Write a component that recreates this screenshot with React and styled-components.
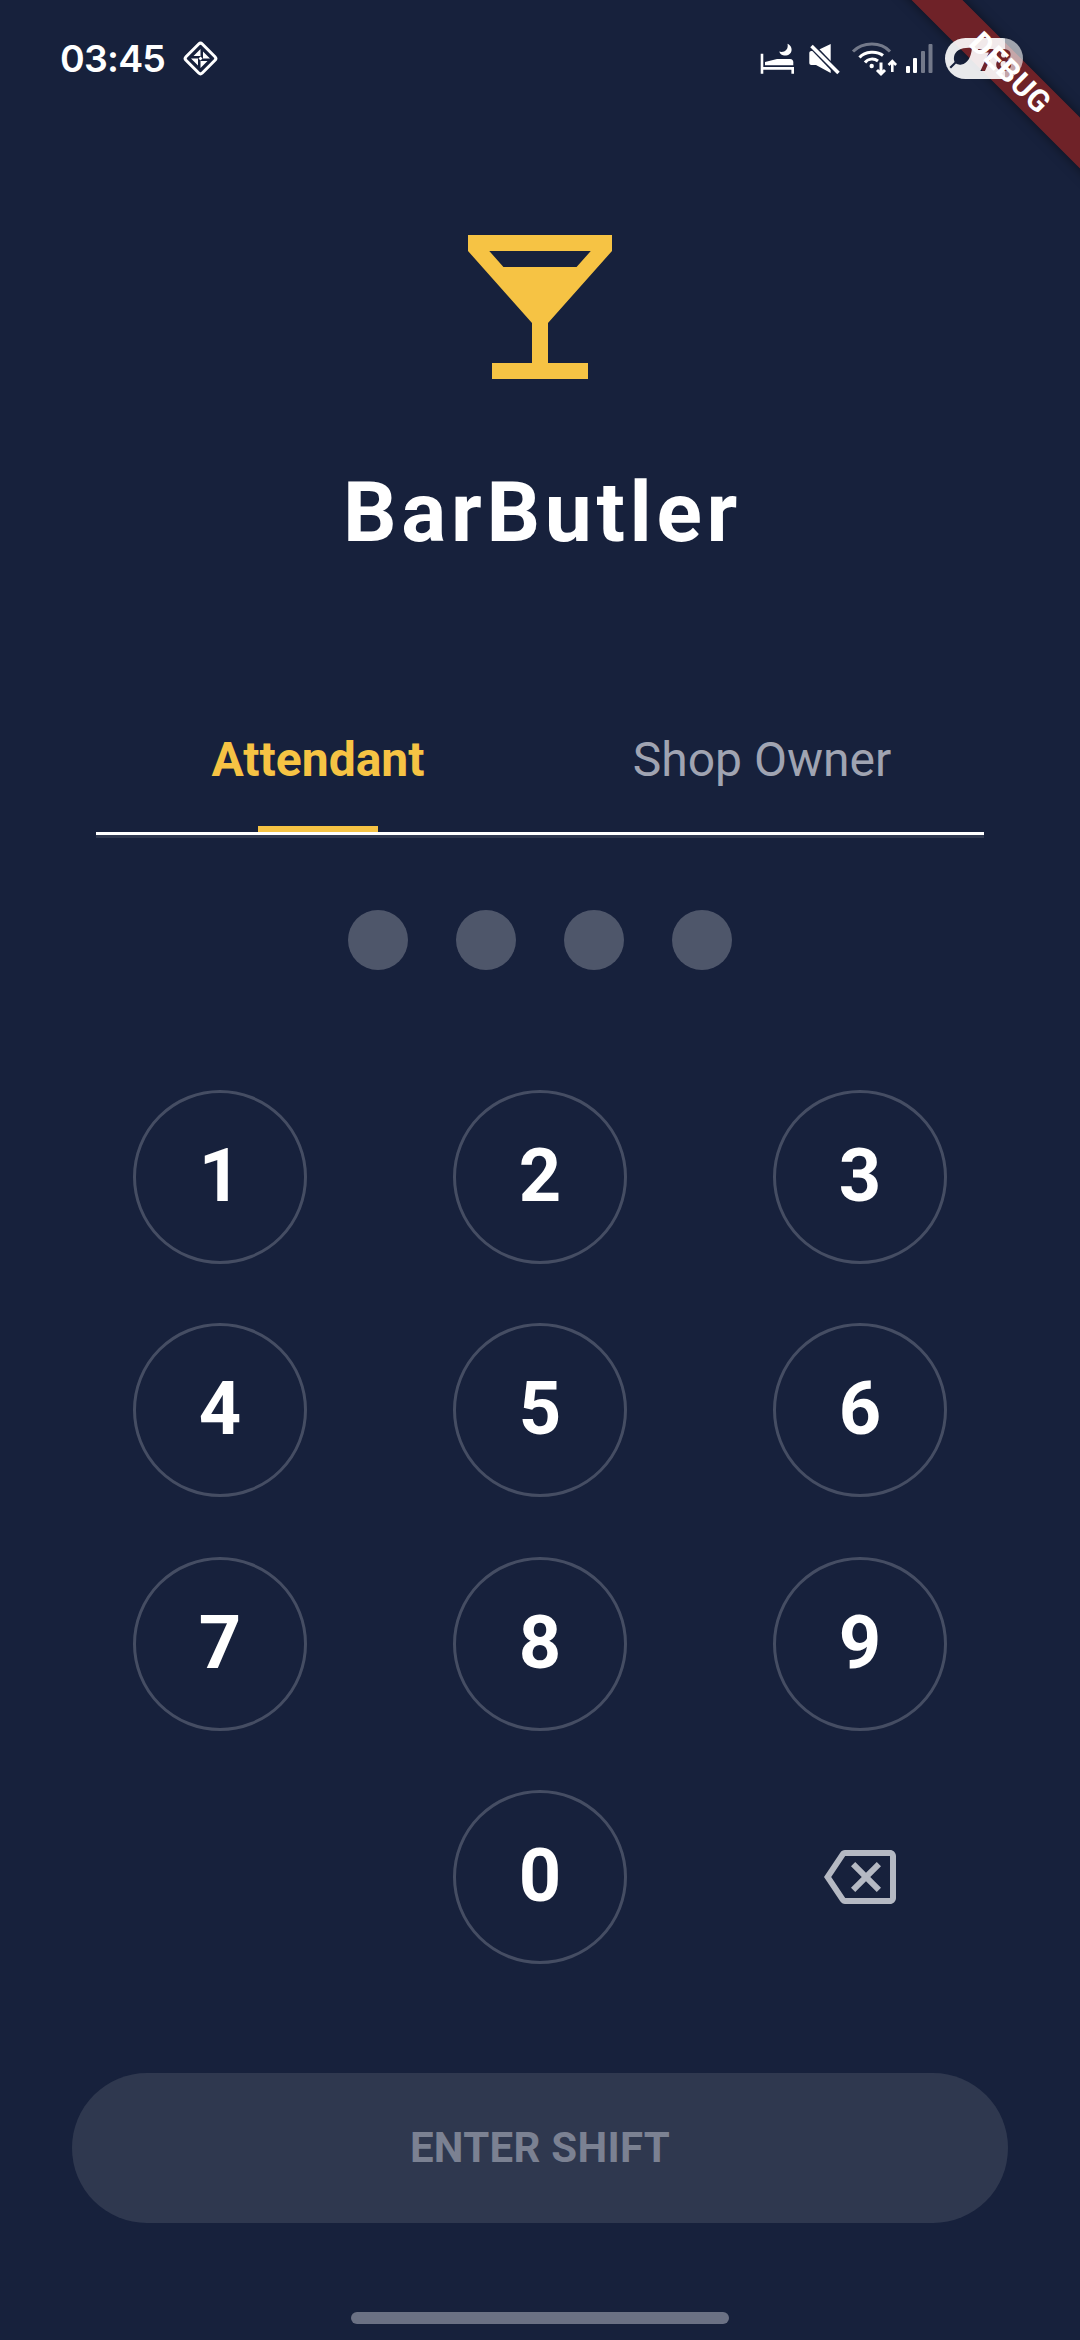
import React from "react";
import styled, { createGlobalStyle } from "styled-components";

const GlobalStyle = createGlobalStyle`
  html, body {
    margin: 0;
    padding: 0;
    background: #17213c;
  }
  * {
    box-sizing: border-box;
  }
`;

const KEYS = ["1", "2", "3", "4", "5", "6", "7", "8", "9", "", "0", "back"];

const App = () => {
  return (
    <Screen>
      <GlobalStyle />
      <DebugBanner>DEBUG</DebugBanner>
      <StatusBar>
        <StatusLeft>
          <Clock>03:45</Clock>
          <DiamondIcon />
        </StatusLeft>
        <StatusRight>
          <IconSlot>
            <BedIcon />
          </IconSlot>
          <IconSlot $gap={13}>
            <MuteIcon />
          </IconSlot>
          <IconSlot $gap={10}>
            <WifiIcon />
          </IconSlot>
          <IconSlot $gap={5}>
            <SignalIcon />
          </IconSlot>
          <PillSlot $gap={11}>
            <BatteryPill />
          </PillSlot>
        </StatusRight>
      </StatusBar>

      <Logo viewBox="0 0 24 24">
        <path d="M21 5V3H3v2l8 9v5H6v2h12v-2h-5v-5l8-9zM7.43 7L5.66 5h12.69l-1.78 2H7.43z" />
      </Logo>
      <Title>BarButler</Title>

      <TabBar>
        <Tab>
          <TabLabel $active>Attendant</TabLabel>
          <TabIndicator />
        </Tab>
        <Tab>
          <TabLabel>Shop Owner</TabLabel>
        </Tab>
      </TabBar>

      <Dots>
        <Dot />
        <Dot />
        <Dot />
        <Dot />
      </Dots>

      <Keypad>
        {KEYS.map((key, i) => {
          if (key === "") return <span key={i} />;
          if (key === "back") {
            return (
              <BackKey key={i}>
                <svg width="72" height="72" viewBox="0 0 24 24" fill="currentColor">
                  <path d="M22 3H7c-.69 0-1.23.35-1.59.88L0 12l5.41 8.11c.36.53.9.89 1.59.89h15c1.1 0 2-.9 2-2V5c0-1.1-.9-2-2-2zm0 16H7.07L2.4 12l4.66-7H22v14zM10.41 17L14 13.41 17.59 17 19 15.59 15.41 12 19 8.41 17.59 7 14 10.59 10.41 7 9 8.41 12.59 12 9 15.59z" />
                </svg>
              </BackKey>
            );
          }
          return <Key key={i}>{key}</Key>;
        })}
      </Keypad>

      <EnterButton>ENTER SHIFT</EnterButton>
      <HomeBar />
    </Screen>
  );
};

export default App;

const DiamondIcon = () => (
  <svg width="37" height="37" viewBox="0 0 37 37" fill="none">
    <rect x="7" y="7" width="23" height="23" rx="2.5" transform="rotate(45 18.5 18.5)" stroke="#fff" strokeWidth="3" />
    <path fill="#fff" d="M18.5 9v7h-7zM28 18.500h-7v-7zM18.500 28v-7h7zM9 18.500h7v7zM18.500 16.500l2 2-2 2-2-2z" />
  </svg>
);

const BedIcon = () => (
  <svg width="35" height="32" viewBox="0 0 35 32" fill="none">
    <path fill="#fff" d="M27.500.7C33.500 3 33.500 13 24 12.500c-2.500-.2-4.200-1.800-4.700-4C23.500 10 29 7 27.500.7z" />
    <path fill="#fff" d="M5 19l12-3h13c2.300 0 3.300 1.500 3.300 3.500v2.800H5z" />
    <path fill="#fff" d="M.7 10.700h2.600V24h30.700v6.700h-2.600v-4H3.300v4H.7z" />
  </svg>
);

const MuteIcon = () => (
  <svg width="32" height="32" viewBox="0 0 32 32" fill="none">
    <path fill="#fff" d="M1.300 10c0-1.100.9-2 2-2H8L22.700 1v29L8 22H3.300c-1.100 0-2-.9-2-2z" />
    <path d="M2 1l28 29" stroke="#17213c" strokeWidth="6.500" />
    <path d="M3.500 3l27 27" stroke="#fff" strokeWidth="3.500" />
  </svg>
);

const WifiIcon = () => (
  <svg width="50" height="36" viewBox="0 0 50 36" fill="none" strokeWidth="3">
    <path d="M3 10.500C13 .5 31 .5 40 10.500" stroke="#fff" strokeOpacity="0.4" />
    <path d="M9.500 16.500C15 10 27 9.500 33 14.500" stroke="#fff" />
    <path d="M15 21.500C18 17.500 24 17 28 20" stroke="#fff" />
    <circle cx="21.700" cy="25" r="2.200" fill="#fff" />
    <path d="M31 21.500V33M27 29l4 4 4-4" stroke="#fff" />
    <path d="M42.300 31V20.500M38.500 24l3.800-3.800 3.800 3.800" stroke="#fff" strokeWidth="2.600" />
  </svg>
);

const SignalIcon = () => (
  <svg width="29" height="30" viewBox="0 0 29 30" fill="#fff">
    <rect x="1" y="22" width="4" height="7" rx="1" />
    <rect x="8" y="14" width="4" height="15" rx="1" />
    <rect x="16" y="7" width="4" height="22" rx="1" fillOpacity="0.4" />
    <rect x="23.500" y="0" width="4" height="29" rx="1" fillOpacity="0.4" />
  </svg>
);

const BatteryPill = () => (
  <svg width="78" height="41" viewBox="0 0 78 41">
    <defs>
      <clipPath id="pill-shape">
        <rect width="78" height="41" rx="20.500" />
      </clipPath>
      <mask id="pill-cut">
        <rect width="78" height="41" fill="#fff" />
        <path fill="#000" d="M27 10c-9-1-17 2-18 9-.3 2 0 3.500.6 5L4.500 29l1.500 1.500 5-5c1.500 1 3.500 1.500 5.500 1 6-1 9.500-7 10.500-16.500z" />
        <text x="32" y="33" fill="#000" fontFamily="Roboto, sans-serif" fontWeight="700" fontSize="31">78</text>
      </mask>
    </defs>
    <g clipPath="url(#pill-shape)" mask="url(#pill-cut)">
      <rect width="60" height="41" fill="#fff" fillOpacity="0.9" />
      <rect x="60" width="18" height="41" fill="#fff" fillOpacity="0.6" />
    </g>
  </svg>
);

const Screen = styled.div`
  position: relative;
  width: 1080px;
  height: 2340px;
  display: flex;
  flex-direction: column;
  align-items: center;
  overflow: hidden;
  background: #17213c;
  font-family: Roboto, "Noto Sans", sans-serif;
  color: #fff;
`;

const DebugBanner = styled.div`
  position: absolute;
  left: 860px;
  top: 55px;
  z-index: 2;
  width: 300px;
  height: 36px;
  line-height: 36px;
  text-align: center;
  transform: rotate(45deg);
  background: rgba(180, 35, 25, 0.56);
  box-shadow: 0 0 12px rgba(0, 0, 0, 0.5);
  font-size: 30.6px;
  font-weight: 700;
  letter-spacing: 0.5px;
  color: #fff;
`;

const StatusBar = styled.div`
  width: 100%;
  height: 117px;
  flex-shrink: 0;
  display: flex;
  align-items: center;
  justify-content: space-between;
  padding: 0 57px 0 60px;
`;

const StatusLeft = styled.div`
  display: flex;
  align-items: center;
  gap: 17px;
`;

const Clock = styled.span`
  font-family: Inter, sans-serif;
  font-size: 37.5px;
  font-weight: 600;
  line-height: 44px;
  letter-spacing: -0.8px;
`;

const StatusRight = styled.div`
  display: flex;
  align-items: center;
`;

const IconSlot = styled.div`
  display: flex;
  margin-left: ${(p) => p.$gap || 0}px;
`;

const PillSlot = styled(IconSlot)`
  position: relative;
  z-index: 3;
`;

const Logo = styled.svg`
  display: block;
  flex-shrink: 0;
  width: 192px;
  height: 192px;
  margin-top: 94px;
  fill: #f6c344;
`;

const Title = styled.h1`
  margin: 60px 0 0;
  padding-left: 5px;
  font-size: 84px;
  line-height: 100px;
  font-weight: 700;
  letter-spacing: 4.7px;
`;

const TabBar = styled.div`
  width: 888px;
  margin-top: 167px;
  display: flex;
  border-bottom: 3px solid #fff;
  box-shadow: 0 3px 0 #2f384f;
`;

const Tab = styled.div`
  flex: 1;
  display: flex;
  flex-direction: column;
  align-items: center;
  height: 102px;
`;

const TabLabel = styled.span`
  font-size: 48px;
  line-height: 60px;
  font-weight: ${(p) => (p.$active ? 700 : 400)};
  color: ${(p) => (p.$active ? "#f6c344" : "#a0a4b2")};
`;

const TabIndicator = styled.div`
  position: relative;
  width: 120px;
  height: 9px;
  margin-top: 36px;
  background: #f6c344;
`;

const Dots = styled.div`
  display: flex;
  gap: 48px;
  margin-top: 75px;
`;

const Dot = styled.div`
  width: 60px;
  height: 60px;
  border-radius: 50%;
  background: rgba(255, 255, 255, 0.24);
`;

const Keypad = styled.div`
  display: grid;
  grid-template-columns: repeat(3, 174px);
  grid-auto-rows: 174px;
  column-gap: 146px;
  row-gap: 59.33px;
  margin-top: 120px;
`;

const Key = styled.button`
  display: flex;
  align-items: center;
  justify-content: center;
  padding: 0 0 3px;
  border: 3px solid rgba(255, 255, 255, 0.2);
  border-radius: 50%;
  background: transparent;
  color: #fff;
  font-family: inherit;
  font-size: 74px;
  font-weight: 700;
`;

const BackKey = styled.div`
  display: flex;
  align-items: center;
  justify-content: center;
  color: #b5b9c3;
`;

const EnterButton = styled.button`
  flex-shrink: 0;
  width: 936px;
  height: 150px;
  margin-top: 109px;
  padding: 0;
  border: none;
  border-radius: 75px;
  background: #2f384f;
  color: #7b8192;
  font-family: inherit;
  font-size: 42px;
  font-weight: 700;
  letter-spacing: 0.3px;
`;

const HomeBar = styled.div`
  flex-shrink: 0;
  width: 378px;
  height: 12px;
  margin-top: 89px;
  border-radius: 6px;
  background: #6b7184;
`;
